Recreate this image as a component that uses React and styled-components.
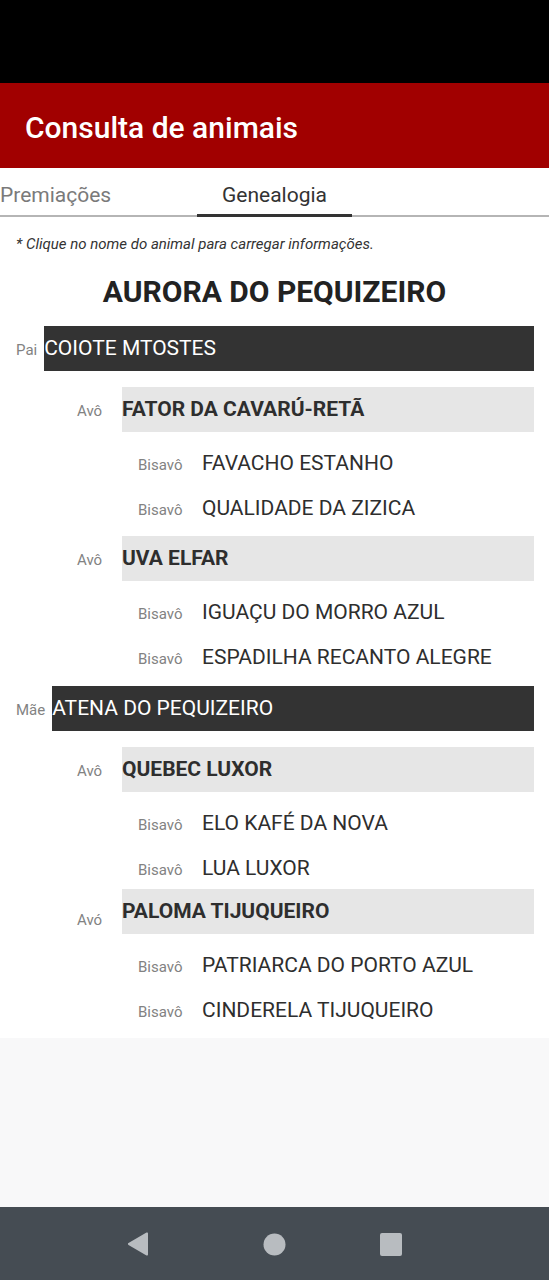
import React from "react";
import styled, { createGlobalStyle } from "styled-components";

const GlobalStyle = createGlobalStyle`
  html, body {
    margin: 0;
    padding: 0;
    background: #f8f8f9;
    font-family: Roboto, "Noto Sans", Arial, sans-serif;
  }
`;

const Screen = styled.div`
  width: 549px;
  min-height: 1280px;
  display: flex;
  flex-direction: column;
  background: #f8f8f9;
`;

const StatusBar = styled.div`
  height: 83px;
  background: #000;
`;

const Header = styled.header`
  height: 85px;
  background: #a10000;
  display: flex;
  align-items: center;
  padding: 4px 0 0 25px;
  box-sizing: border-box;
`;

const HeaderTitle = styled.h1`
  margin: 0;
  color: #fff;
  font-size: 30px;
  font-weight: 500;
`;

const Tabs = styled.nav`
  height: 49px;
  background: #fff;
  display: flex;
  border-bottom: 2px solid #b5b5b5;
  box-sizing: border-box;
`;

const Tab = styled.div`
  width: ${(p) => p.$w}px;
  display: flex;
  align-items: center;
  justify-content: ${(p) => (p.$center ? "center" : "flex-start")};
  font-size: 21px;
  color: ${(p) => (p.$active ? "#333" : "#7a7a7a")};
  border-bottom: 3px solid ${(p) => (p.$active ? "#333" : "transparent")};
  margin-bottom: -2px;
  padding-top: 8px;
  box-sizing: border-box;
`;

const Content = styled.main`
  background: #fff;
  padding-bottom: 5px;
`;

const Note = styled.p`
  margin: 0;
  padding: 19px 0 0 16px;
  font-size: 15px;
  line-height: 16px;
  font-style: italic;
  color: #333;
`;

const AnimalTitle = styled.h2`
  margin: 24px 0 0;
  text-align: center;
  font-size: 30px;
  line-height: 32px;
  font-weight: 700;
  color: #222;
`;

const ParentRow = styled.div`
  display: flex;
  align-items: baseline;
  gap: 7px;
  padding: 0 15px 0 16px;
  margin-top: ${(p) => p.$top}px;
`;

const Label = styled.span`
  flex: none;
  width: ${(p) => (p.$w ? `${p.$w}px` : "auto")};
  font-size: 15px;
  color: #828282;
  ${(p) => p.$low && "align-self: flex-end; margin-bottom: 5px;"}
`;

const ParentBar = styled.div`
  flex: 1;
  height: 45px;
  line-height: 45px;
  background: #333;
  color: #fff;
  font-size: 21px;
`;

const GrandRow = styled.div`
  display: flex;
  align-items: baseline;
  padding: 0 15px 0 77px;
  margin-top: ${(p) => p.$top}px;
`;

const GrandBar = styled.div`
  flex: 1;
  height: 45px;
  line-height: 45px;
  background: #e6e6e6;
  color: #2e2e2e;
  font-size: 21px;
  font-weight: 700;
`;

const GreatList = styled.div`
  padding-top: 9px;
`;

const GreatRow = styled.div`
  display: flex;
  align-items: baseline;
  height: 45px;
  line-height: 45px;
  padding-left: 138px;
`;

const GreatName = styled.span`
  font-size: 21px;
  color: #2e2e2e;
`;

const Filler = styled.div`
  flex: 1;
  background: #f8f8f9;
`;

const NavBar = styled.div`
  height: 73px;
  background: #454c53;
  display: flex;
  align-items: center;
  padding-left: 127px;
`;

const NavButton = styled.svg`
  flex: none;
  margin-left: ${(p) => p.$ml || 0}px;
  margin-top: 1px;
`;

const tree = [
  {
    role: "Pai",
    name: "COIOTE MTOSTES",
    top: 18,
    grands: [
      { role: "Avô", name: "FATOR DA CAVARÚ-RETÃ", top: 16, greats: ["FAVACHO ESTANHO", "QUALIDADE DA ZIZICA"] },
      { role: "Avô", name: "UVA ELFAR", top: 5, greats: ["IGUAÇU DO MORRO AZUL", "ESPADILHA RECANTO ALEGRE"] },
    ],
  },
  {
    role: "Mãe",
    name: "ATENA DO PEQUIZEIRO",
    top: 6,
    grands: [
      { role: "Avô", name: "QUEBEC LUXOR", top: 16, greats: ["ELO KAFÉ DA NOVA", "LUA LUXOR"] },
      { role: "Avó", name: "PALOMA TIJUQUEIRO", top: -2, low: true, greats: ["PATRIARCA DO PORTO AZUL", "CINDERELA TIJUQUEIRO"] },
    ],
  },
];

const App = () => {
  return (
    <Screen>
      <GlobalStyle />
      <StatusBar />
      <Header>
        <HeaderTitle>Consulta de animais</HeaderTitle>
      </Header>
      <Tabs>
        <Tab $w={197}>Premiações</Tab>
        <Tab $w={155} $center $active>
          Genealogia
        </Tab>
      </Tabs>
      <Content>
        <Note>* Clique no nome do animal para carregar informações.</Note>
        <AnimalTitle>AURORA DO PEQUIZEIRO</AnimalTitle>
        {tree.map((parent) => (
          <React.Fragment key={parent.name}>
            <ParentRow $top={parent.top}>
              <Label>{parent.role}</Label>
              <ParentBar>{parent.name}</ParentBar>
            </ParentRow>
            {parent.grands.map((g) => (
              <React.Fragment key={g.name}>
                <GrandRow $top={g.top}>
                  <Label $w={45} $low={g.low}>
                    {g.role}
                  </Label>
                  <GrandBar>{g.name}</GrandBar>
                </GrandRow>
                <GreatList>
                  {g.greats.map((n) => (
                    <GreatRow key={n}>
                      <Label $w={64}>Bisavô</Label>
                      <GreatName>{n}</GreatName>
                    </GreatRow>
                  ))}
                </GreatList>
              </React.Fragment>
            ))}
          </React.Fragment>
        ))}
      </Content>
      <Filler />
      <NavBar>
        <NavButton width="22" height="24" viewBox="0 0 22 24">
          <path d="M21 1.5v21a1 1 0 0 1-1.5.9L1.5 12.9a1 1 0 0 1 0-1.8L19.5 0.6A1 1 0 0 1 21 1.5z" fill="#b8bcc0" />
        </NavButton>
        <NavButton $ml={114} width="23" height="23" viewBox="0 0 23 23">
          <circle cx="11.5" cy="11.5" r="11" fill="#b8bcc0" />
        </NavButton>
        <NavButton $ml={94} width="22" height="23" viewBox="0 0 22 23">
          <rect x="0" y="0" width="22" height="23" rx="2" fill="#b8bcc0" />
        </NavButton>
      </NavBar>
    </Screen>
  );
};

export default App;
